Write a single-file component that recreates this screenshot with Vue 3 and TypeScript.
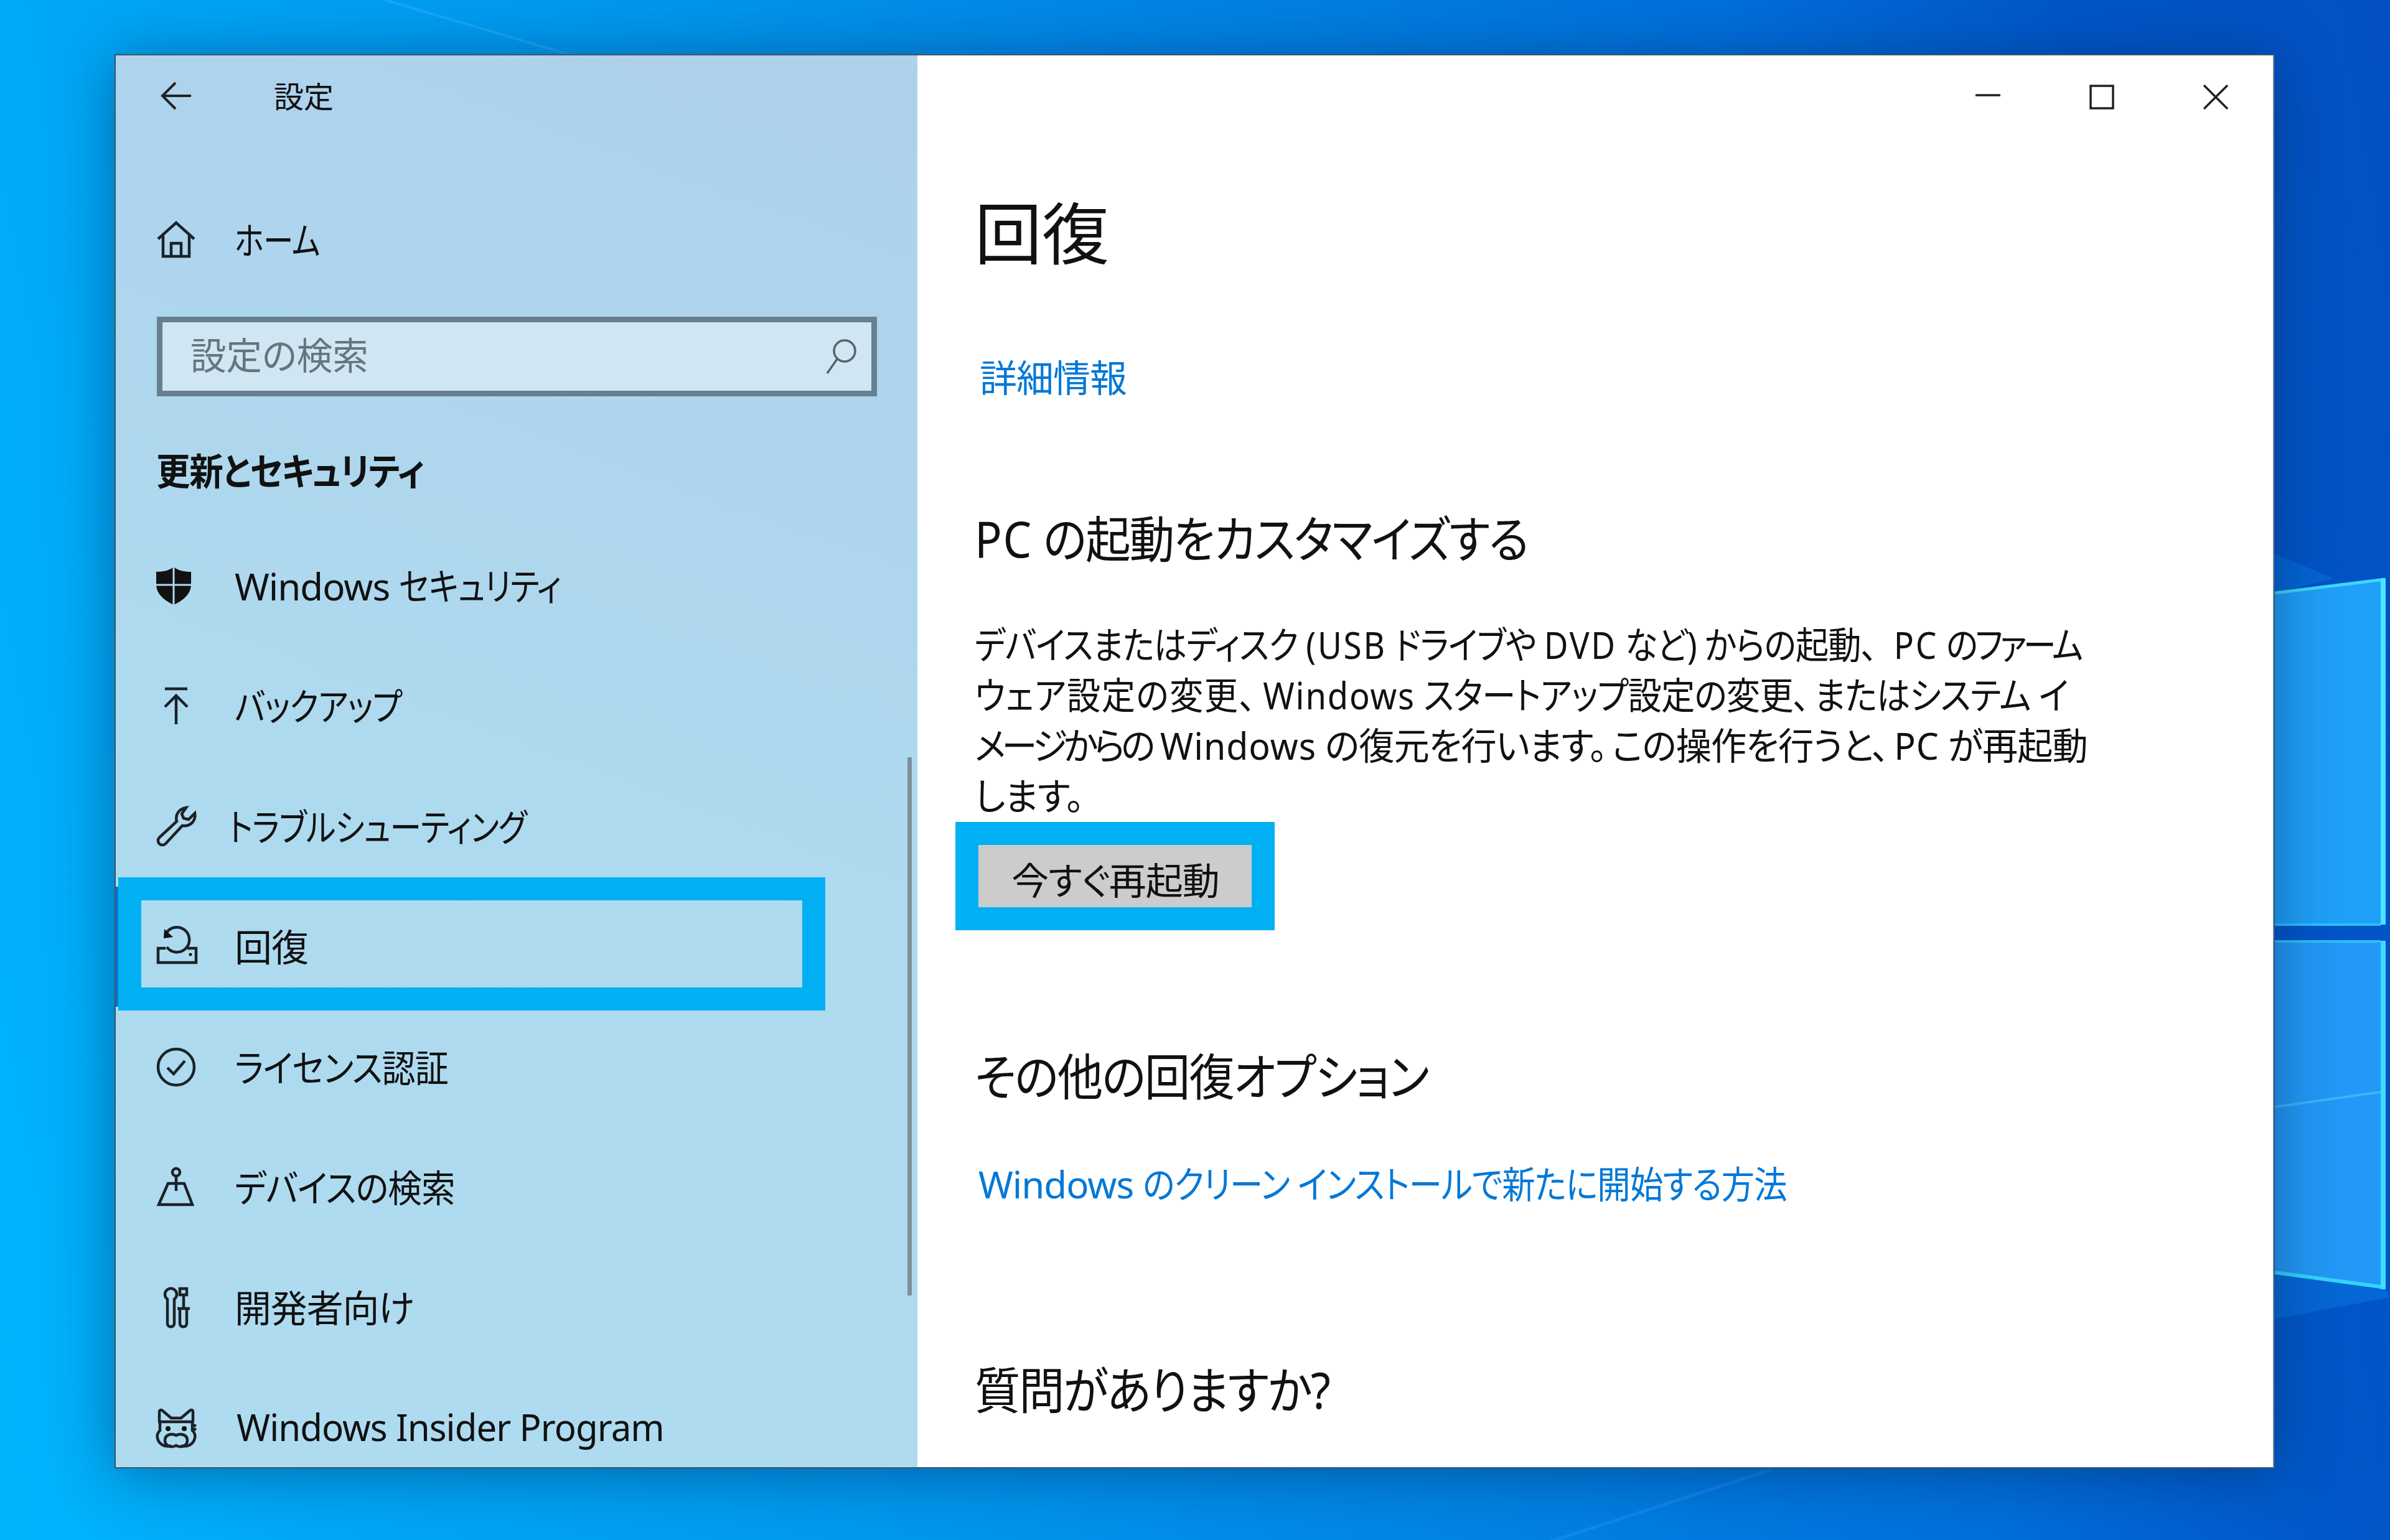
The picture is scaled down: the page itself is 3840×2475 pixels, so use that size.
<script setup lang="ts">
interface NavItem { prefix?: string; label: string; icon: string; scale: number; active?: boolean; shift?: number }
const items: NavItem[] = [
  { prefix: 'Windows ', label: 'セキュリティ', icon: 'shield', scale: 0.855 },
  { label: 'バックアップ', icon: 'backup', scale: 0.866 },
  { label: 'トラブルシューティング', icon: 'wrench', scale: 0.846, shift: -10 },
  { label: '回復', icon: 'recovery', scale: 1, active: true },
  { label: 'ライセンス認証', icon: 'check', scale: 0.9 },
  { label: 'デバイスの検索', icon: 'find', scale: 0.91 },
  { label: '開発者向け', icon: 'dev', scale: 0.98 },
  { label: 'Windows Insider Program', icon: 'cat', scale: 0.97, shift: 3 },
]
function labelStyle(item: NavItem) {
  return { transform: `scaleX(${item.scale})`, marginLeft: item.shift ? `${item.shift}px` : undefined }
}
</script>

<template>
  <div class="desktop">
    <svg class="wall" viewBox="0 0 3840 2475" width="3840" height="2475">
      <polygon points="612,0 626,0 924,88 908,88" fill="#30b4ff" opacity="0.45" />
      <polygon points="2834,2363 2850,2363 2508,2475 2490,2475" fill="#2a98ff" opacity="0.35" />
      <polygon points="3655,890 3750,930 3655,953" fill="#0a84ee" opacity="0.35" />
      <polygon points="3655,953 3833,929 3833,1486 3655,1486" fill="#1fa0f8" />
      <polygon points="3655,1512 3833,1512 3833,2072 3655,2047" fill="#2398f6" />
      <polygon points="3655,2047 3833,2072 3840,2085 3655,2120" fill="#0a74e0" opacity="0.55" />
      <line x1="3655" y1="953" x2="3825" y2="932" stroke="#3fd8fb" stroke-width="5" />
      <line x1="3655" y1="1486" x2="3825" y2="1486" stroke="#2cc0fa" stroke-width="4" />
      <line x1="3655" y1="1513" x2="3825" y2="1513" stroke="#2cc0fa" stroke-width="4" />
      <line x1="3655" y1="1779" x2="3825" y2="1755" stroke="#3cb4fa" stroke-width="4" />
      <line x1="3655" y1="2045" x2="3825" y2="2068" stroke="#35d4fb" stroke-width="6" />
      <rect x="3825" y="929" width="8" height="557" fill="#48e4fd" />
      <rect x="3825" y="1512" width="8" height="560" fill="#3cdcfc" />
    </svg>

    <div class="window">
      <aside class="sidebar">
        <div class="titlebar">
          <svg class="back" viewBox="0 0 50 46" width="50" height="46">
            <path d="M49 23H3M24 2L3 23L24 44" />
          </svg>
          <span class="app-title">設定</span>
        </div>

        <div class="nav-row home">
          <svg class="icon" viewBox="0 0 64 64"><path d="M3 31L32 5L61 31M11 25V59H53V25M24 59V38H40V59" /></svg>
          <span class="nav-label sq s-home">ホーム</span>
        </div>

        <div class="search">
          <span class="sq s-search">設定の検索</span>
          <svg viewBox="0 0 52 58" width="52" height="58"><circle cx="31" cy="20" r="17" /><path d="M19 33L3 56" /></svg>
        </div>

        <h2 class="section sq s-section">更新とセキュリティ</h2>

        <nav class="nav">
          <div v-for="item in items" :key="item.label" class="nav-row" :class="{ active: item.active }">
            <svg class="icon" viewBox="0 0 64 64">
              <template v-if="item.icon === 'shield'">
                <path class="solid" d="M28 2C21 8 11 10 0 10V30C0 45 12 56 28 63C44 56 56 45 56 30V10C45 10 35 8 28 2Z" />
                <path class="cut" d="M28 2V63M0 31H56" />
              </template>
              <path v-else-if="item.icon === 'backup'" d="M14 5H50M32 62V16M14 34L32 16L50 34" />
              <path v-else-if="item.icon === 'wrench'" d="M5 50L33 24C30 14 36 4 48 2L41 12L44 19L52 21L62 11C64 22 56 33 42 31L15 60A7 7 0 0 1 5 50Z" />
              <template v-else-if="item.icon === 'recovery'">
                <path d="M15 35H3V58H64V35H50M16 11A20 20 0 1 1 17 33" />
                <path class="solid" d="M13 4L27 17L12 19Z" />
                <circle class="solid" cx="55" cy="45" r="2.5" />
              </template>
              <template v-else-if="item.icon === 'check'">
                <circle cx="32" cy="32" r="29" />
                <path d="M18 33L28 43L46 22" />
              </template>
              <template v-else-if="item.icon === 'find'">
                <circle cx="32" cy="8" r="6" />
                <path d="M32 14V38M19 26H45L58 60H4Z" />
              </template>
              <template v-else-if="item.icon === 'dev'">
                <path d="M18 19V58C18 65 29 65 29 58V19A9.5 9.5 0 1 0 18 19Z" />
                <path d="M38 2H49V12H38ZM44 12V34M34 34H54M38 34V58C38 65 49 65 49 58V34" />
              </template>
              <template v-else>
                <path d="M5 22V6C5 3 8 2 10 4L24 16H40L54 4C56 2 59 3 59 6V22M3 22H61M6 24V36C2 40 1 44 2 48C4 58 14 64 24 60M58 24V36C62 40 63 44 62 48C60 58 50 64 40 60M32 44C26 40 14 42 14 52C14 62 26 64 32 60C38 64 50 62 50 52C50 42 38 40 32 44ZM60 27L64 29M60 33L64 35" />
                <circle class="solid" cx="19" cy="33" r="4" />
                <circle class="solid" cx="45" cy="33" r="4" />
              </template>
            </svg>
            <span class="nav-label">
              <template v-if="item.prefix">{{ item.prefix }}</template>
              <span class="sq" :style="labelStyle(item)">{{ item.label }}</span>
            </span>
          </div>
        </nav>
        <div class="scroll"></div>
      </aside>

      <main class="content">
        <div class="controls">
          <svg viewBox="0 0 40 40" width="40" height="40"><path d="M0 17H40" /></svg>
          <svg viewBox="0 0 40 40" width="40" height="40"><rect x="2" y="2" width="36" height="36" /></svg>
          <svg viewBox="0 0 40 40" width="40" height="40"><path d="M1 1L39 39M39 1L1 39" /></svg>
        </div>
        <h1>回復</h1>
        <a class="link first">詳細情報</a>
        <h3 class="h-start line s-h3a"><span class="lat">PC</span> の起動をカスタマイズする</h3>
        <div class="body">
          <span class="line l1">デバイスまたはディスク <span class="lat">(USB</span> ドライブや <span class="lat">DVD</span> など) からの起動、&#8201;<span class="lat pc">PC</span> <span class="tail">のファーム</span></span>
          <span class="line l2"><span class="wide">ウェア設定の変更、&#8201;</span><span class="lat">Windows</span> スタートアップ設定の変更、&#8201;またはシステム イ</span>
          <span class="line l3"><span class="tight">メージからの</span> <span class="lat">Windows</span> の復元を行います。&#8201;この操作を行うと、&#8201;<span class="lat">PC</span> が再起動</span>
          <span class="line l4">します。</span>
        </div>
        <button type="button">今すぐ再起動</button>
        <h3 class="h-other line s-h3">その他の回復オプション</h3>
        <a class="link second">Windows <span class="sq s-link">のクリーン インストールで新たに開始する方法</span></a>
        <h3 class="h-q line s-h3">質問がありますか?</h3>
      </main>
    </div>
  </div>
</template>

<style>
html, body { margin: 0; padding: 0; }
</style>

<style scoped>
.desktop {
  position: relative;
  width: 3840px;
  height: 2475px;
  overflow: hidden;
  background: linear-gradient(80deg, #00b5fd 0%, #00a8f7 12%, #0097ee 35%, #0084e5 55%, #006fdb 75%, #0056c8 88%, #0450c4 100%);
  font-family: "Noto Sans", "Noto Sans CJK JP", sans-serif;
  font-feature-settings: "palt";
  color: #111;
}
.wall { position: absolute; left: 0; top: 0; }
.window {
  position: absolute;
  left: 184px;
  top: 87px;
  width: 3470px;
  height: 2273px;
  box-sizing: border-box;
  display: flex;
  overflow: hidden;
  border: 2px solid #3b5563;
  border-right-color: #6d7f8a;
  box-shadow: 0 8px 90px rgba(0, 30, 70, 0.45);
  background: #fff;
}
.sq {
  display: inline-block;
  transform-origin: left center;
  white-space: nowrap;
}
.line {
  display: block;
  width: max-content;
  transform-origin: left center;
  white-space: nowrap;
}
.s-home { transform: scaleX(0.81); }
.s-search { transform: scaleX(0.96); margin-bottom: 10px; }
.s-section { transform: scaleX(0.91); }
.s-h3 { transform: scaleX(0.915); }
.s-h3a { transform: scaleX(0.905); }
.s-h3a .lat { letter-spacing: 2px; }
.s-link { transform: scaleX(0.89); }
.sidebar {
  position: relative;
  width: 1288px;
  flex: none;
  background: linear-gradient(200deg, #aed1ec 0%, #aedaef 55%, #aedbf0 100%);
}
.titlebar {
  height: 130px;
  display: flex;
  align-items: center;
  padding-left: 72px;
}
.back path { fill: none; stroke: #222; stroke-width: 4; }
.app-title { font-size: 48px; margin: 0 0 4px 132px; }
.icon { width: 64px; height: 64px; flex: none; overflow: visible; }
.icon path, .icon circle { fill: none; stroke: #1c2226; stroke-width: 4.5; }
.icon .solid { fill: #111; stroke: none; }
.icon .cut { stroke: #aedaef; stroke-width: 3; }
.nav-row {
  position: relative;
  height: 193.4px;
  display: flex;
  align-items: center;
  gap: 62px;
  padding-left: 65px;
  font-size: 60px;
  letter-spacing: -1px;
}
.nav-label { margin-bottom: 4px; white-space: nowrap; }
.home { margin-top: 69px; }
.search {
  margin: 28px 0 0 66px;
  width: 1157px;
  height: 128px;
  box-sizing: border-box;
  border: 9px solid #66808f;
  background: #d0e6f3;
  display: flex;
  align-items: center;
  justify-content: space-between;
  padding: 0 22px 0 45px;
  font-size: 60px;
  color: #66747e;
}
.search circle, .search path { fill: none; stroke: #55636c; stroke-width: 3.5; }
.section {
  display: block;
  margin: 70px 0 0 65px;
  height: 100px;
  line-height: 100px;
  font-size: 60px;
  font-weight: 700;
  letter-spacing: -1.5px;
}
.nav { margin-top: 37px; }
.active::before {
  content: "";
  position: absolute;
  left: 0;
  top: 0;
  bottom: 0;
  width: 4px;
  background: #0078d7;
}
.active::after {
  content: "";
  position: absolute;
  left: 4px;
  top: -15px;
  width: 1136px;
  height: 214px;
  box-sizing: border-box;
  border: 37px solid #00b0f3;
}
.scroll {
  position: absolute;
  right: 9px;
  top: 1128px;
  width: 7px;
  height: 865px;
  background: #7f8f99;
}
.content {
  position: relative;
  flex: 1;
  padding-left: 92px;
  overflow: hidden;
}
.controls {
  position: absolute;
  right: 72px;
  top: 47px;
  display: flex;
  gap: 143px;
}
.controls path, .controls rect { fill: none; stroke: #222; stroke-width: 3.5; }
h1 {
  margin: 211px 0 0;
  height: 150px;
  line-height: 150px;
  font-size: 108px;
  font-weight: 400;
}
.link {
  display: block;
  height: 80px;
  line-height: 80px;
  font-size: 60px;
  color: #0078d7;
  letter-spacing: -1px;
  white-space: nowrap;
}
.first { margin: 117px 0 0 8px; }
.second { margin: 79px 0 0 6px; }
h3 {
  height: 110px;
  line-height: 110px;
  font-size: 80px;
  font-weight: 400;
  letter-spacing: -2px;
}
.h-start { margin: 163px 0 0; }
.h-other { margin: 216px 0 0; }
.h-q { margin: 235px 0 0; }
.body {
  margin-top: 76px;
  font-size: 60px;
  line-height: 81px;
  letter-spacing: -1px;
  height: 324px;
}
.l1 { transform: scaleX(0.887); }
.l1 .lat { letter-spacing: 3px; }
.l1 .pc { margin-left: 22px; }
.l1 .tail { letter-spacing: -5.5px; }
.l2 { transform: scaleX(0.905); }
.l2 .lat { letter-spacing: 2px; }
.l2 .wide { letter-spacing: 1.5px; }
.l3 { transform: scaleX(0.9535); }
.l3 .lat { letter-spacing: 1px; }
.l3 .tight { letter-spacing: -6.5px; }
.l4 { transform: scaleX(0.97); }
button {
  position: relative;
  display: block;
  margin: 38px 0 0 6px;
  width: 440px;
  height: 100px;
  border: none;
  padding: 8px 0 0;
  background: #ccc;
  color: #111;
  font: inherit;
  font-size: 60px;
  font-feature-settings: "palt";
  letter-spacing: -1px;
}
button::after {
  content: "";
  position: absolute;
  left: -37px;
  top: -37px;
  width: 513px;
  height: 174px;
  box-sizing: border-box;
  border: 37px solid #00b0f3;
}
</style>
